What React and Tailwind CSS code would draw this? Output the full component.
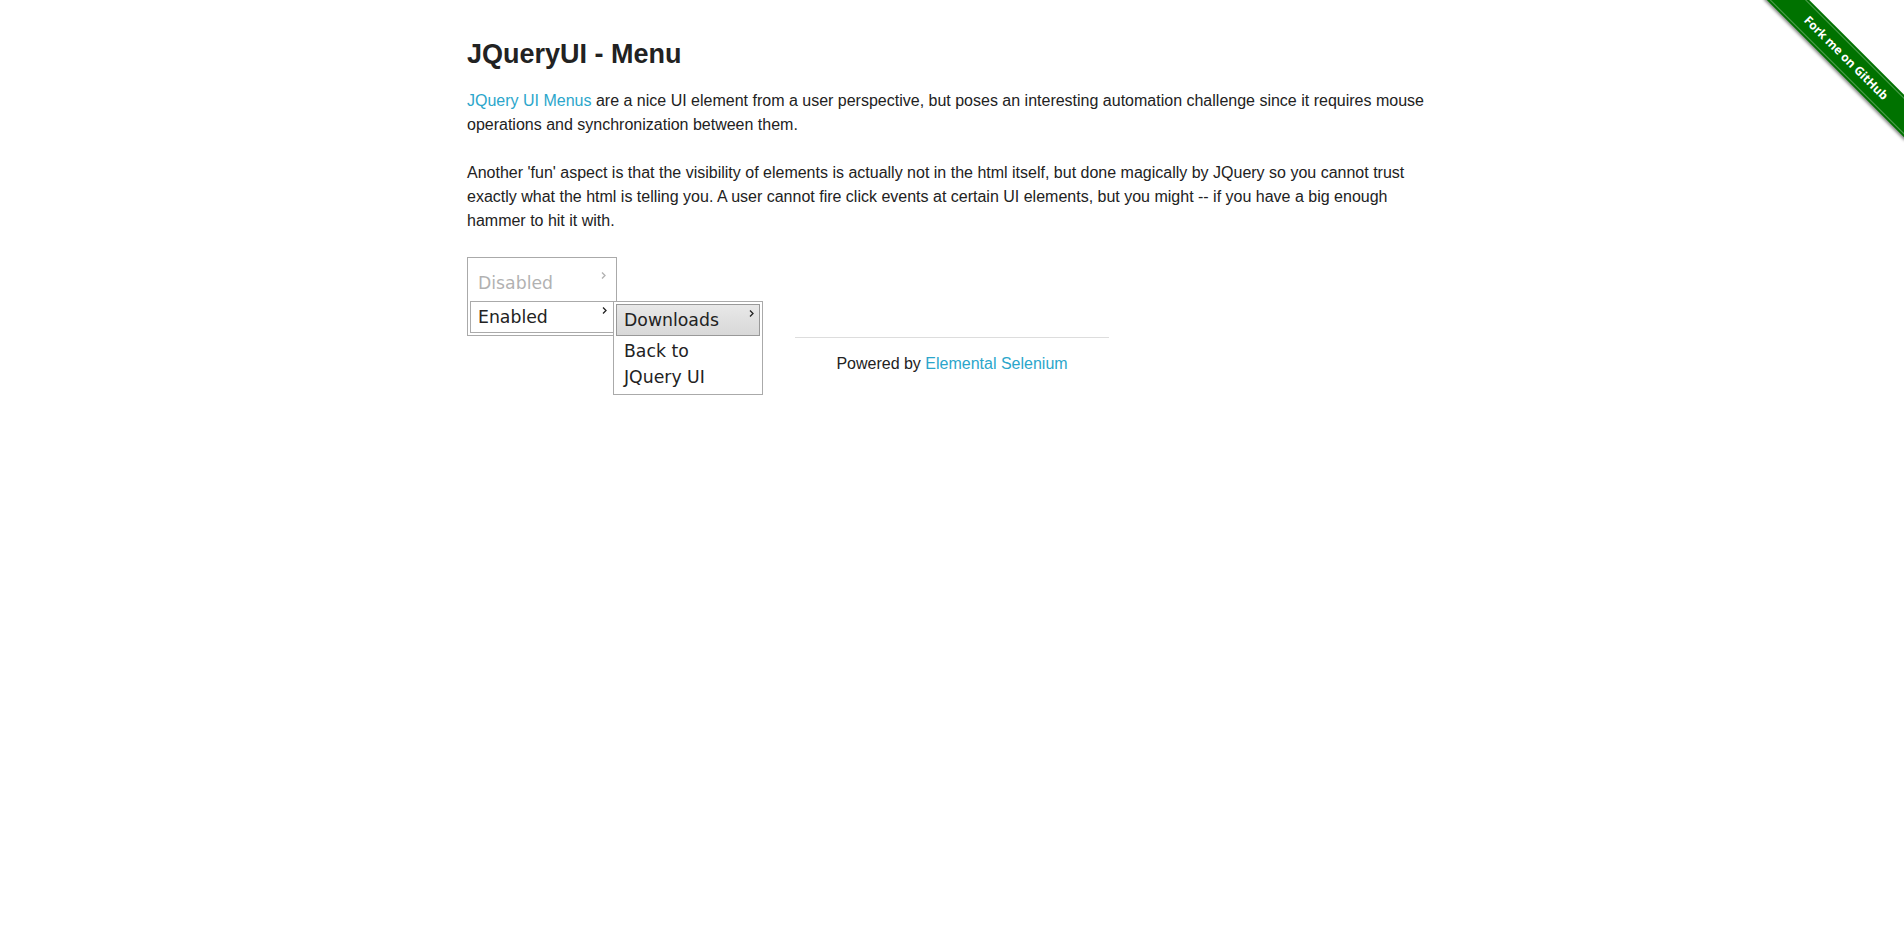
import React from "react";

function Chevron({ className }) {
  return (
    <svg
      width="5"
      height="7"
      viewBox="0 0 5 7"
      className={className}
      fill="none"
    >
      <path d="M1 0.5 L4 3.5 L1 6.5" stroke="#222" strokeWidth="1.3" />
    </svg>
  );
}

function Ribbon() {
  return (
    <div className="absolute top-0 right-0 w-[149px] h-[149px] overflow-hidden pointer-events-none">
      <div className="absolute top-[43px] left-[-9px] w-[200px] h-[30px] rotate-45 bg-[#007200] py-[2px] shadow-[0_2px_3px_rgba(0,0,0,0.45)]">
        <div className="h-full border-y border-white/30 flex items-center justify-center text-white text-[12px] font-bold font-['Open_Sans','Liberation_Sans',sans-serif]">
          Fork me on GitHub
        </div>
      </div>
    </div>
  );
}

function JqMenu() {
  return (
    <div className="relative w-[150px] font-['DejaVu_Sans',Verdana,sans-serif] text-[17.3px] leading-[26px] text-[#222]">
      <ul className="border border-[#aaa] bg-white p-[2px]">
        {/* disabled item */}
        <li className="relative mt-[8px] mb-[3px] px-[8px] py-[2px] opacity-35">
          Disabled
          <Chevron className="absolute right-[8px] top-[4px]" />
        </li>
        {/* active item, submenu open */}
        <li className="relative">
          <div className="relative border border-[#aaa] bg-white px-[7px] py-[2px]">
            Enabled
            <Chevron className="absolute right-[6px] top-[5px]" />
          </div>
        </li>
      </ul>

      {/* submenu */}
      <ul className="absolute left-[146px] top-[44px] w-[150px] border border-[#aaa] bg-white p-[2px] z-10">
        <li className="relative border border-[#999] bg-gradient-to-b from-[#e8e8e8] to-[#d8d8d8] px-[7px] py-[2px]">
          Downloads
          <Chevron className="absolute right-[5px] top-[5px]" />
        </li>
        <li className="px-[8px] py-[2px]">
          Back to
          <br />
          JQuery UI
        </li>
      </ul>
    </div>
  );
}

export default function App() {
  return (
    <div className="relative min-h-[947px] bg-white font-['Liberation_Sans',Arial,sans-serif] text-[#222]">
      <Ribbon />
      <div className="w-[970px] mx-auto pt-[35px]">
        <h3 className="text-[27px] font-bold leading-[38px] mb-[16px]">
          JQueryUI - Menu
        </h3>
        <p className="text-base leading-6 mb-6">
          <a className="text-[#2ba6cb]">JQuery UI Menus</a> are a nice UI
          element from a user perspective, but poses an interesting automation
          challenge since it requires mouse operations and synchronization
          between them.
        </p>
        <p className="text-base leading-6 mb-6">
          Another 'fun' aspect is that the visibility of elements is actually
          not in the html itself, but done magically by JQuery so you cannot
          trust exactly what the html is telling you. A user cannot fire click
          events at certain UI elements, but you might -- if you have a big
          enough hammer to hit it with.
        </p>

        <JqMenu />

        <div className="w-[314px] mx-auto">
          <hr className="mt-[1px] border-[#ddd]" />
          <div className="mt-[14px] text-center text-base leading-6">
            Powered by <a className="text-[#2ba6cb]">Elemental Selenium</a>
          </div>
        </div>
      </div>
    </div>
  );
}
